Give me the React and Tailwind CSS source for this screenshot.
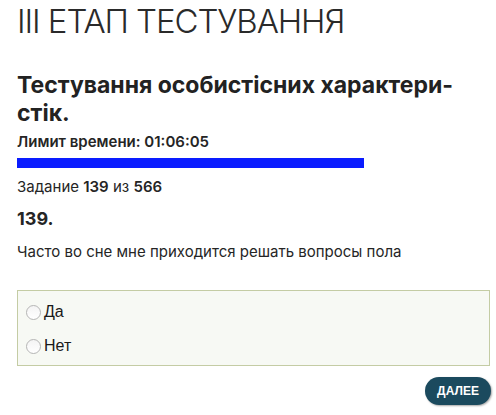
import React from 'react';

const options = ['Да', 'Нет'];

const App = () => {
  return (
    <div className="min-h-screen bg-white pl-[17px] pr-[6px] pt-[1px] font-['Inter',sans-serif] text-[#252525]">
      <h1 className="text-[33px] font-light leading-[40px] tracking-[-1.1px] text-[#2a2a2a]">
        III ЕТАП ТЕСТУВАННЯ
      </h1>

      <h2 className="mt-[30px] text-[23px] font-bold leading-[28px] text-[#222]">
        Тестування особистісних характери-
        <br />
        стік.
      </h2>

      <div className="mt-[5px] text-[15px] font-semibold leading-[20px]">Лимит времени: 01:06:05</div>
      <div className="mt-[6px] h-[10px] w-[347px] bg-[#0a1cff]" />

      <div className="mt-[9px] text-[15px] leading-[20px]">
        Задание <span className="font-semibold">139</span> из <span className="font-semibold">566</span>
      </div>

      <div className="mt-[10px] text-[18px] font-bold leading-[24px]">139.</div>

      <p className="mt-[11px] text-[15px] leading-[20px]">Часто во сне мне приходится решать вопросы пола</p>

      {/* answers */}
      <div className="mt-[28px] border border-[#c4cca4] bg-[#f7f9f4] pb-[2px] pl-[8px] pt-[4px]">
        {options.map((opt) => (
          <label key={opt} className="flex h-[34px] items-center gap-[3px] font-['Liberation_Sans',sans-serif] text-[16px] text-[#1a1a1a]">
            <span className="h-[15px] w-[15px] rounded-full border border-[#b5b5b5] bg-gradient-to-b from-[#f4f4f4] to-white" />
            {opt}
          </label>
        ))}
      </div>

      <div className="mt-[11px] flex justify-end">
        <button className="mr-[-1px] h-[28px] w-[66px] rounded-full bg-[#1b4a5e] font-['Liberation_Sans',sans-serif] text-[12px] font-bold text-white shadow-[1px_1px_2px_rgba(0,0,0,0.35)]">
          ДАЛЕЕ
        </button>
      </div>
    </div>
  );
};

export default App;
